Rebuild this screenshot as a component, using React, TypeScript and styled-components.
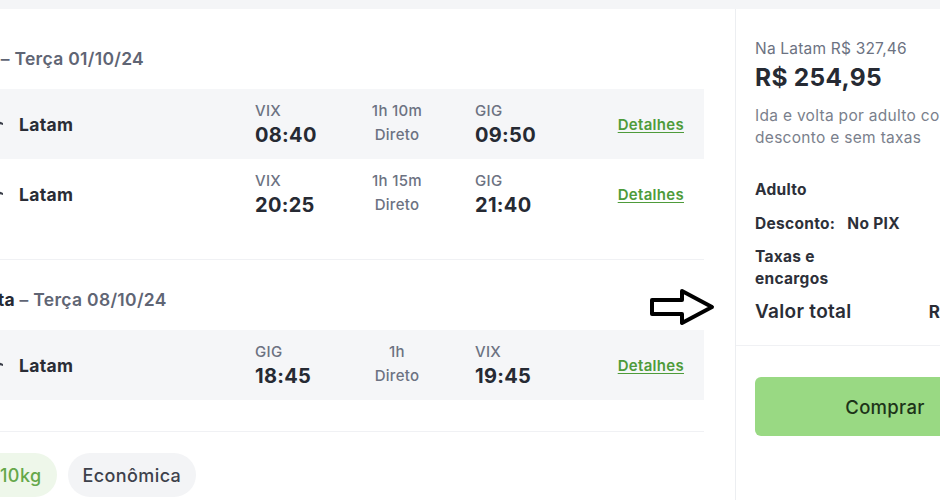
import React from "react";
import styled, { createGlobalStyle } from "styled-components";

const Global = createGlobalStyle`
  html, body { margin: 0; padding: 0; }
  body {
    background: #f4f5f7;
    overflow: hidden;
    font-family: Inter, "Noto Sans", "Liberation Sans", sans-serif;
    color: #262a33;
    -webkit-font-smoothing: antialiased;
  }
`;

const Page = styled.div`
  position: relative;
  width: 940px;
  height: 500px;
  overflow: hidden;
`;

const Card = styled.div`
  display: flex;
  margin-top: 9px;
  margin-left: -47px;
  background: #ffffff;
  width: 1082px;
  height: 491px;
`;

const LeftCol = styled.div`
  width: 751px;
  padding-top: 10px;
  margin-right: 31px;
  flex-shrink: 0;
`;

const Section = styled.section<{ $pb: number }>`
  padding-top: 28px;
  padding-bottom: ${(p) => p.$pb}px;
  border-bottom: 1px solid #f0f1f4;
`;

const Heading = styled.h2`
  margin: 0 0 18px 16px;
  font-size: 17.5px;
  line-height: 24px;
  font-weight: 600;
  color: #5f6574;
  letter-spacing: 0.3px;
`;

const Strong = styled.span`
  color: #262a33;
  font-weight: 700;
`;

const Row = styled.div<{ $hl?: boolean }>`
  display: grid;
  grid-template-columns: 263px 64px 110px 1fr auto;
  column-gap: 23px;
  align-items: center;
  height: 70px;
  padding: 0 20px 0 16px;
  background: ${(p) => (p.$hl ? "#f5f6f8" : "#ffffff")};
`;

const Airline = styled.div`
  display: flex;
  align-items: center;
  gap: 16px;
  font-size: 17.5px;
  font-weight: 700;
  color: #2a2d36;
  letter-spacing: 0.3px;
`;

const Logo = styled.svg`
  width: 34px;
  height: 20px;
  flex-shrink: 0;
`;

const Stack = styled.div<{ $center?: boolean }>`
  display: flex;
  flex-direction: column;
  gap: 2px;
  align-items: ${(p) => (p.$center ? "center" : "flex-start")};
`;

const Code = styled.span`
  font-size: 15px;
  line-height: 20px;
  color: #6c7282;
  font-weight: 500;
  letter-spacing: 0.3px;
`;

const Time = styled.span`
  font-size: 20px;
  line-height: 24px;
  font-weight: 700;
  color: #262a33;
  letter-spacing: 0.3px;
`;

const Dur = styled.span`
  font-size: 15px;
  line-height: 24px;
  color: #6c7282;
  font-weight: 500;
  letter-spacing: 0.3px;
`;

const DurTop = styled(Dur)`
  line-height: 20px;
`;

const Link = styled.a`
  font-size: 15px;
  font-weight: 600;
  color: #4e9b3a;
  letter-spacing: 0.3px;
  text-decoration: underline;
  text-underline-offset: 2px;
  cursor: pointer;
`;

const Pills = styled.div`
  display: flex;
  gap: 11px;
  padding: 21px 0 0 16px;
`;

const Pill = styled.div<{ $green?: boolean }>`
  display: flex;
  align-items: center;
  gap: 4px;
  height: 44px;
  padding: 0 15px;
  border-radius: 22px;
  font-size: 18px;
  font-weight: 500;
  letter-spacing: 0.4px;
  background: ${(p) => (p.$green ? "#eef7ea" : "#f3f4f6")};
  color: ${(p) => (p.$green ? "#65a84a" : "#3d414b")};
`;

const Side = styled.aside`
  width: 300px;
  flex-shrink: 0;
  border-left: 1px solid #eceef1;
  box-sizing: border-box;
`;

const SideTop = styled.div`
  padding: 30px 20px 21px 19px;
  border-bottom: 1px solid #f0f1f4;
`;

const OldPrice = styled.div`
  font-size: 15.5px;
  line-height: 20px;
  color: #6c7282;
  letter-spacing: 0.2px;
`;

const Price = styled.div`
  margin-top: 3px;
  font-size: 24.5px;
  line-height: 30px;
  font-weight: 700;
  color: #262a33;
  letter-spacing: 0.3px;
`;

const Desc = styled.p`
  margin: 13px 0 0;
  font-size: 15.5px;
  line-height: 22px;
  color: #7a7f8c;
  letter-spacing: 0.3px;
`;

const Lines = styled.div`
  margin-top: 31px;
  display: flex;
  flex-direction: column;
`;

const Line = styled.div<{ $mt?: number }>`
  display: flex;
  justify-content: space-between;
  align-items: flex-start;
  margin-top: ${(p) => p.$mt ?? 0}px;
  font-size: 15.5px;
  line-height: 20px;
  font-weight: 700;
  color: #2d3039;
  letter-spacing: 0.3px;
`;

const LineLabel = styled.span<{ $narrow?: boolean }>`
  display: flex;
  gap: 12px;
  line-height: ${(p) => (p.$narrow ? "22px" : "20px")};
  width: ${(p) => (p.$narrow ? "90px" : "auto")};
`;

const LineValue = styled.span<{ $muted?: boolean }>`
  font-size: 14px;
  letter-spacing: 0;
  color: ${(p) => (p.$muted ? "#8a8f9b" : "#2d3039")};
`;

const TotalLine = styled(Line)`
  font-size: 19px;
  line-height: 24px;
  font-weight: 600;
  color: #2a2d36;
`;

const TotalValue = styled.span`
  font-size: 17px;
  font-weight: 700;
  letter-spacing: 0;
`;

const SideBottom = styled.div`
  padding: 31px 20px 0 19px;
`;

const Buy = styled.button`
  width: 260px;
  height: 59px;
  border: none;
  border-radius: 6px;
  background: #99d983;
  color: #1d3419;
  font-family: inherit;
  font-size: 18.5px;
  font-weight: 500;
  letter-spacing: 0.3px;
  cursor: pointer;
`;

const Arrow = styled.svg`
  position: absolute;
  left: 648px;
  top: 287px;
  width: 68px;
  height: 40px;
`;

const LatamLogo = () => (
  <Logo viewBox="0 0 34 20">
    <path d="M24 10 Q29 6 34 9 L34 11 Q29 9 26 12 Z" fill="#3b3f4a" />
  </Logo>
);

type Flight = { dep: string; depT: string; dur: string; arr: string; arrT: string; hl?: boolean };

const FlightRow = ({ f }: { f: Flight }) => (
  <Row $hl={f.hl}>
    <Airline>
      <LatamLogo />
      Latam
    </Airline>
    <Stack>
      <Code>{f.dep}</Code>
      <Time>{f.depT}</Time>
    </Stack>
    <Stack $center>
      <DurTop>{f.dur}</DurTop>
      <Dur>Direto</Dur>
    </Stack>
    <Stack>
      <Code>{f.arr}</Code>
      <Time>{f.arrT}</Time>
    </Stack>
    <Link>Detalhes</Link>
  </Row>
);

const ida: Flight[] = [
  { dep: "VIX", depT: "08:40", dur: "1h 10m", arr: "GIG", arrT: "09:50", hl: true },
  { dep: "VIX", depT: "20:25", dur: "1h 15m", arr: "GIG", arrT: "21:40" },
];
const volta: Flight[] = [
  { dep: "GIG", depT: "18:45", dur: "1h", arr: "VIX", arrT: "19:45", hl: true },
];

export default function App() {
  return (
    <Page>
      <Global />
      <Card>
        <LeftCol>
          <Section $pb={30}>
            <Heading>
              <Strong>Ida</Strong> – Terça 01/10/24
            </Heading>
            {ida.map((f, i) => (
              <FlightRow key={i} f={f} />
            ))}
          </Section>
          <Section $pb={31}>
            <Heading>
              <Strong>Volta</Strong> – Terça 08/10/24
            </Heading>
            {volta.map((f, i) => (
              <FlightRow key={i} f={f} />
            ))}
          </Section>
          <Pills>
            <Pill $green>
              <svg width="12" height="14" viewBox="0 0 12 14" fill="none" stroke="#65a84a" strokeWidth="1.6">
                <rect x="1" y="4" width="10" height="9" rx="2" />
                <path d="M4 4V2h4v2" />
              </svg>
              10kg
            </Pill>
            <Pill>Econômica</Pill>
          </Pills>
        </LeftCol>
        <Side>
          <SideTop>
            <OldPrice>Na Latam R$ 327,46</OldPrice>
            <Price>R$ 254,95</Price>
            <Desc>Ida e volta por adulto com desconto e sem taxas</Desc>
            <Lines>
              <Line>
                <LineLabel>Adulto</LineLabel>
                <LineValue>R$ 327,46</LineValue>
              </Line>
              <Line $mt={14}>
                <LineLabel>
                  <span>Desconto:</span>
                  <span>No PIX</span>
                </LineLabel>
                <LineValue $muted>-R$ 72,51</LineValue>
              </Line>
              <Line $mt={12}>
                <LineLabel $narrow>Taxas e encargos</LineLabel>
                <LineValue>R$ 0,00</LineValue>
              </Line>
              <TotalLine $mt={10}>
                <span>Valor total</span>
                <TotalValue>R$ 254,95</TotalValue>
              </TotalLine>
            </Lines>
          </SideTop>
          <SideBottom>
            <Buy>Comprar</Buy>
          </SideBottom>
        </Side>
      </Card>
      <Arrow viewBox="0 0 68 40">
        <path
          d="M4 13 H34 V4 L64 20 L34 36 V27 H4 Z"
          fill="#ffffff"
          stroke="#000000"
          strokeWidth="4"
          strokeLinejoin="round"
        />
      </Arrow>
    </Page>
  );
}
